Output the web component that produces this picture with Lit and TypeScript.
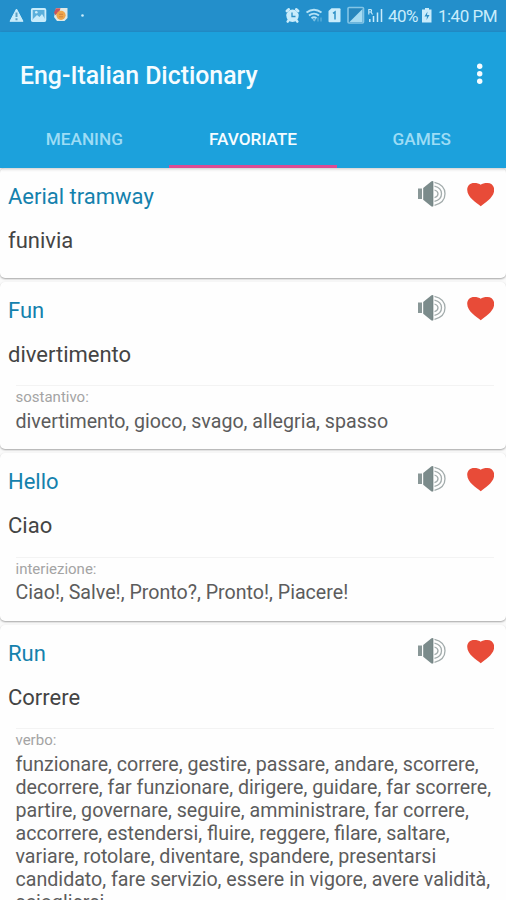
import { LitElement, html, css } from "lit";
import { customElement, property } from "lit/decorators.js";

interface Entry {
  word: string;
  translation: string;
  kind?: string;
  meanings?: string;
}

const ENTRIES: Entry[] = [
  { word: "Aerial tramway", translation: "funivia" },
  { word: "Fun", translation: "divertimento", kind: "sostantivo:", meanings: "divertimento, gioco, svago, allegria, spasso" },
  { word: "Hello", translation: "Ciao", kind: "interiezione:", meanings: "Ciao!, Salve!, Pronto?, Pronto!, Piacere!" },
  {
    word: "Run",
    translation: "Correre",
    kind: "verbo:",
    meanings:
      "funzionare, correre, gestire, passare, andare, scorrere, decorrere, far funzionare, dirigere, guidare, far scorrere, partire, governare, seguire, amministrare, far correre, accorrere, estendersi, fluire, reggere, filare, saltare, variare, rotolare, diventare, spandere, presentarsi candidato, fare servizio, essere in vigore, avere validità, sciogliersi",
  },
];

@customElement("status-bar")
class StatusBar extends LitElement {
  static styles = css`
    :host {
      display: flex;
      justify-content: space-between;
      height: 32px;
      background: #238fcb;
      color: #c9ecfb;
      font-size: 17px;
      letter-spacing: -0.5px;
      line-height: 33px;
    }
    svg { display: block; }
    .right { display: flex; padding-right: 9px; }
    .pct { width: 32px; white-space: nowrap; }
    .time { width: 60px; white-space: nowrap; text-align: right; }
  `;
  render() {
    return html`
      <svg width="100" height="32" viewBox="0 0 100 32">
        <path d="M16.5 9L23 21.300H10Z" fill="#c9ecfb" stroke="#c9ecfb" stroke-linejoin="round" />
        <path d="M16.500 12.500v4.500M16.500 18.300v2" stroke="#5c9fc4" stroke-width="2" />
        <rect x="31.800" y="9" width="13.600" height="12" rx="1" fill="#5aafdb" stroke="#c9ecfb" stroke-width="1.800" />
        <path d="M33 19l4-4 2.500 2 2.500-3 3 5v1.500H33Z" fill="#c9ecfb" />
        <circle cx="36.300" cy="12.300" r="1.300" fill="#c9ecfb" />
        <path d="M56 8h11.500v10l-3 3h-7.500l-3-4Z" fill="#dfe9e6" />
        <path d="M54 12.500l2-4.200h4.500l-1 3-4 4Z" fill="#c8545c" />
        <circle cx="61" cy="15.300" r="4.600" fill="#eda64c" />
        <path d="M59 14.300h4M59 16.800h4" stroke="#cf8340" />
        <circle cx="82.500" cy="15.500" r="1.300" fill="#c9ecfb" />
      </svg>
      <div class="right">
        <svg width="104" height="32" viewBox="284 0 104 32">
          <circle cx="292.500" cy="15.800" r="6.200" fill="#c9ecfb" />
          <path d="M286.800 11l2-1.700M298.200 11l-2-1.700M288.500 20.500l-.8 1M296.500 20.500l.8 1" stroke="#c9ecfb" stroke-width="2.600" stroke-linecap="round" />
          <path d="M292 12.500v4h3.500" fill="none" stroke="#2d90c6" stroke-width="1.300" />
          <g fill="none" stroke="#b4e2f6" stroke-width="1.900">
            <path d="M306.500 12.500q7.500-5.500 15 0M309 15.500q5-3.800 10 0M311.500 18.300q2.500-2 5 0" />
          </g>
          <path d="M313 19.500h2.500l-1.200 1.700ZM318 17.500v4M321 17.500v4" fill="#c9ecfb" stroke="#6db9df" stroke-width="1" />
          <path d="M328.500 11l3-2.800h8a1 1 0 0 1 1 1v12a1 1 0 0 1-1 1h-10a1 1 0 0 1-1-1Z" fill="#c9ecfb" />
          <path d="M333 13.300l2-1.300v7.500" fill="none" stroke="#2d90c6" stroke-width="1.500" />
          <rect x="348" y="7.500" width="15.500" height="15.500" rx="1" fill="#2686bd" stroke="#83c5e6" stroke-width="1.600" />
          <path d="M362.500 9v13h-13Z" fill="#a5dbf2" />
          <path d="M368.800 14.500v-5h2q1.500 1.300 0 2.500h-2M371 12l1.500 2.500" fill="none" stroke="#c9ecfb" stroke-width="1.100" />
          <path d="M369.800 19v3M373.500 16v6M377.500 12.500v9.500M381.500 9v13" stroke="#c9ecfb" stroke-width="1.500" />
        </svg>
        <span class="pct">40%</span>
        <svg width="17" height="32" viewBox="421 0 17 32">
          <path d="M426 8h4v1.500h2.500v13h-9.500v-13h3Z" fill="#c9ecfb" />
          <path d="M428.500 11.500l-3 5h2.500l-.5 3.500 3-5H428Z" fill="#2d90c6" />
        </svg>
        <span class="time">1:40 PM</span>
      </div>
    `;
  }
}

@customElement("entry-card")
class EntryCard extends LitElement {
  @property({ attribute: false }) entry!: Entry;
  static styles = css`
    :host {
      display: block;
      box-sizing: border-box;
      min-height: 110px;
      padding: 14px 12px 16.500px 8px;
      background: #fefefe;
      border-radius: 5px;
      box-shadow: 0 1px 2px rgba(0, 0, 0, 0.34);
    }
    .head { display: flex; justify-content: space-between; height: 30px; }
    .word { font-size: 22px; line-height: 30px; color: #1481ad; }
    .icons { display: flex; margin-top: -5px; }
    svg { display: block; }
    .translation { margin-top: 14px; font-size: 22px; line-height: 30px; color: #444; }
    .detail { margin: 15.500px 0 0 7.500px; border-top: 1px solid #f3f3f3; padding-top: 2px; }
    .kind { font-size: 15px; line-height: 18px; color: #a4a4a4; }
    .meanings { margin-right: -12px; padding-right: 8px; font-size: 19.640px; line-height: 23px; margin-top: 3.500px; color: #5c5c5c; }
  `;
  render() {
    const e = this.entry;
    return html`
      <div class="head">
        <span class="word">${e.word}</span>
        <div class="icons">
          <svg width="80" height="34" viewBox="414 177 80 34">
            <path d="M418 188.500h4v10.500h-4Z" fill="#899797" />
            <path d="M423.200 188l8.300-6.800h1.300v25.300h-1.300l-8.300-6.700Z" fill="#7b8b8b" />
            <path d="M432.700 181.200v25" stroke="#748484" stroke-width="1.300" />
            <path d="M434.500 182.300q10.500 2.500 10.500 11.500t-10.500 11.500M434.500 186.200q7 1.700 7 7.600t-7 7.600M434.500 190q3.500 1 3.500 3.800t-3.500 3.800" fill="none" stroke="#a3acac" stroke-width="1.300" />
            <path d="M480.700 206.200C476.500 202.500 467.200 197.500 467.200 189.700C467.200 185.500 470.300 182.900 474 182.900C477 182.900 479.400 183.300 480.700 184.800C482 183.300 484.500 182.900 487.500 182.900C491.200 182.900 494.200 185.500 494.200 189.700C494.200 197.500 485 202.500 480.700 206.200Z" fill="#e84b38" />
          </svg>
        </div>
      </div>
      <div class="translation">${e.translation}</div>
      ${e.kind
        ? html`<div class="detail">
            <div class="kind">${e.kind}</div>
            <div class="meanings">${e.meanings}</div>
          </div>`
        : ""}
    `;
  }
}

@customElement("app-root")
class AppRoot extends LitElement {
  static styles = css`
    :host {
      display: flex;
      flex-direction: column;
      height: 900px;
      overflow: hidden;
      background: #fafafa;
      font-family: Roboto, "Liberation Sans", sans-serif;
    }
    status-bar { flex: none; }
    .bar { background: #1ca1dc; color: #f5fcff; z-index: 1; box-shadow: 0 1px 3px rgba(0, 0, 0, 0.22); flex: none; }
    .top { box-sizing: border-box; display: flex; align-items: center; justify-content: space-between; height: 81px; padding: 5px 20px 0; }
    .title { font-size: 24.850px; font-weight: 500; }
    .dots { display: block; }
    .tabs { display: grid; grid-template-columns: 1fr 1fr 1fr; height: 54.500px; }
    .tab { box-sizing: border-box; padding-top: 3px; text-align: center; line-height: 46px; font-size: 17.200px; font-weight: 500; color: #9ddcf5; border-bottom: 3px solid transparent; }
    .tab.active { color: #f5fcff; border-color: #dd4a93; }
    .list { display: flex; flex-direction: column; gap: 4px; }
  `;
  render() {
    return html`
      <status-bar></status-bar>
      <div class="bar">
        <div class="top">
          <span class="title">Eng-Italian Dictionary</span>
          <svg class="dots" width="12" height="24" viewBox="0 0 12 24" fill="#f5fcff">
            <circle cx="5.700" cy="3.200" r="2.700" /><circle cx="5.700" cy="10.700" r="2.700" /><circle cx="5.700" cy="18.300" r="2.700" />
          </svg>
        </div>
        <div class="tabs">
          <span class="tab">MEANING</span>
          <span class="tab active">FAVORIATE</span>
          <span class="tab">GAMES</span>
        </div>
      </div>
      <div class="list">${ENTRIES.map((e) => html`<entry-card .entry=${e}></entry-card>`)}</div>
    `;
  }
}
